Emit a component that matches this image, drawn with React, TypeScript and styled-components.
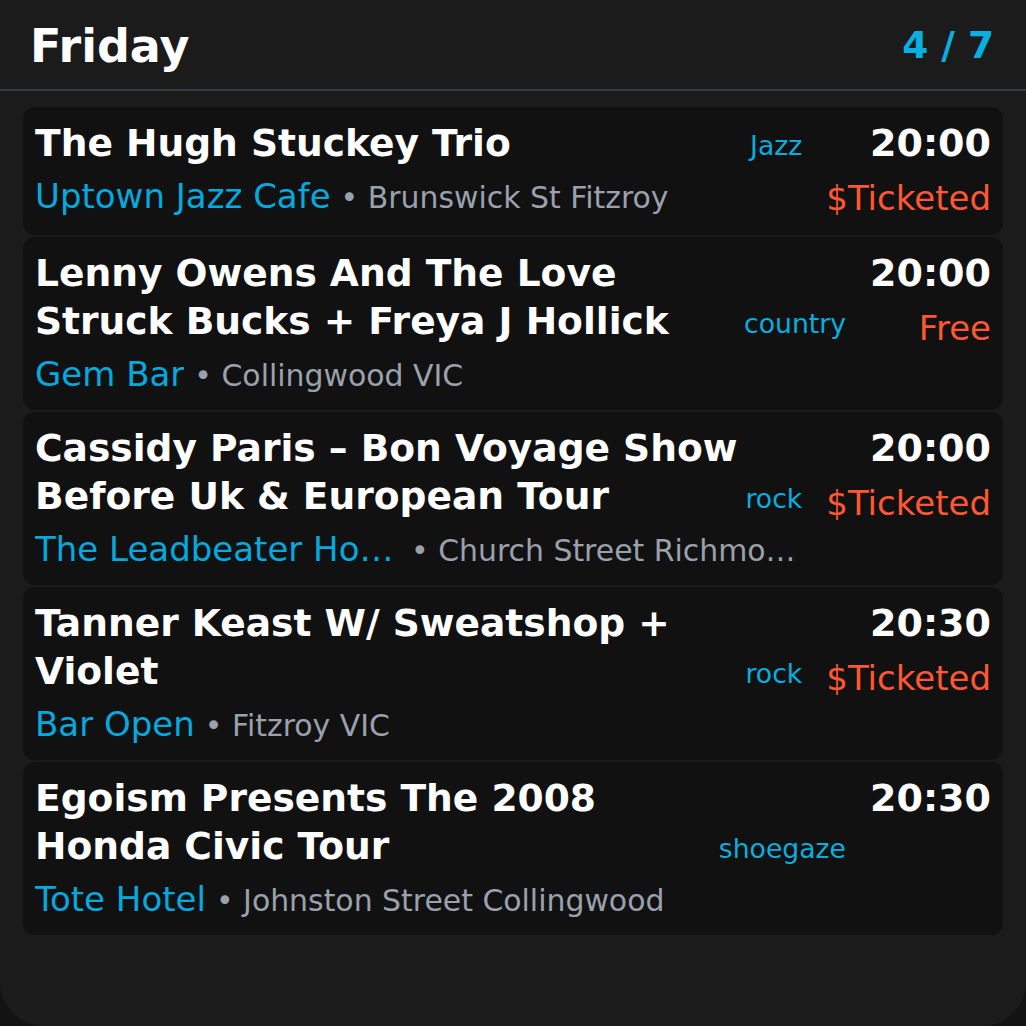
import React from "react";
import styled, { createGlobalStyle } from "styled-components";

const Global = createGlobalStyle`
  html, body { margin: 0; padding: 0; background: #131313; }
  body { font-family: "DejaVu Sans", "Noto Sans", sans-serif; }
  * { box-sizing: border-box; }
`;

const Screen = styled.div`
  width: 1026px;
  height: 1026px;
  background: #1b1b1b;
  border-radius: 0 0 44px 44px;
  overflow: hidden;
  display: flex;
  flex-direction: column;
`;

const Header = styled.header`
  height: 91px;
  display: flex;
  align-items: center;
  justify-content: space-between;
  padding: 2px 32px 0 30px;
  border-bottom: 2px solid #363c46;
`;

const Day = styled.h1`
  margin: 0;
  font-size: 46px;
  font-weight: 700;
  color: #ffffff;
  line-height: 1;
`;

const Count = styled.div`
  font-size: 37.4px;
  font-weight: 700;
  color: #08b0e2;
  line-height: 1;
`;

const List = styled.div`
  display: flex;
  flex-direction: column;
  gap: 2px;
  padding: 16px 23px 0 23px;
`;

const Card = styled.div`
  background: #111111;
  border-radius: 12px;
  padding: 12px;
  display: flex;
  gap: 24px;
`;

const Main = styled.div`
  flex: 1;
  min-width: 0;
  display: flex;
  flex-direction: column;
`;

const TitleRow = styled.div`
  display: flex;
  align-items: flex-end;
  gap: 3px;
`;

const Title = styled.div`
  flex: 1;
  font-size: 37.6px;
  font-weight: 700;
  line-height: 48px;
  color: #ffffff;
`;

const Genre = styled.div`
  font-size: 26.7px;
  line-height: 30px;
  color: #0aaede;
  margin-bottom: 6px;
  white-space: nowrap;
`;

const VenueLine = styled.div`
  display: flex;
  align-items: baseline;
  margin-top: 6px;
  height: 47px;
  line-height: 46px;
  white-space: nowrap;
  min-width: 0;
`;

const Venue = styled.span<{ $max?: number }>`
  font-size: 34px;
  color: #05a9de;
  overflow: hidden;
  text-overflow: ellipsis;
  flex: 0 0 auto;
  max-width: ${(p) => (p.$max ? `${p.$max}px` : "none")};
`;

const Address = styled.span`
  font-size: 29.9px;
  color: #9aa1ad;
  overflow: hidden;
  text-overflow: ellipsis;
  flex: 0 1 auto;
  min-width: 0;
  margin-left: 10px;
`;

const Side = styled.div`
  display: flex;
  flex-direction: column;
  align-items: flex-end;
`;

const Time = styled.div`
  font-size: 38px;
  font-weight: 700;
  line-height: 48px;
  color: #ffffff;
`;

const Price = styled.div`
  font-size: 34px;
  line-height: 50px;
  color: #ff5733;
  margin-top: 6px;
`;

type Gig = {
  title: string;
  genre: string;
  venue: string;
  address: string;
  time: string;
  price?: string;
  venueMax?: number;
};

const gigs: Gig[] = [
  {
    title: "The Hugh Stuckey Trio",
    genre: "Jazz",
    venue: "Uptown Jazz Cafe",
    address: "Brunswick St Fitzroy",
    time: "20:00",
    price: "$Ticketed",
  },
  {
    title: "Lenny Owens And The Love Struck Bucks + Freya J Hollick",
    genre: "country",
    venue: "Gem Bar",
    address: "Collingwood VIC",
    time: "20:00",
    price: "Free",
  },
  {
    title: "Cassidy Paris – Bon Voyage Show Before Uk & European Tour",
    genre: "rock",
    venue: "The Leadbeater Hotel",
    address: "Church Street Richmond VIC",
    time: "20:00",
    price: "$Ticketed",
    venueMax: 366,
  },
  {
    title: "Tanner Keast W/ Sweatshop + Violet",
    genre: "rock",
    venue: "Bar Open",
    address: "Fitzroy VIC",
    time: "20:30",
    price: "$Ticketed",
  },
  {
    title: "Egoism Presents The 2008 Honda Civic Tour",
    genre: "shoegaze",
    venue: "Tote Hotel",
    address: "Johnston Street Collingwood",
    time: "20:30",
  },
];

export default function App() {
  return (
    <>
      <Global />
      <Screen>
        <Header>
          <Day>Friday</Day>
          <Count>4 / 7</Count>
        </Header>
        <List>
          {gigs.map((g) => (
            <Card key={g.title}>
              <Main>
                <TitleRow>
                  <Title>{g.title}</Title>
                  <Genre>{g.genre}</Genre>
                </TitleRow>
                <VenueLine>
                  <Venue $max={g.venueMax}>{g.venue}</Venue>
                  <Address>• {g.address}</Address>
                </VenueLine>
              </Main>
              <Side>
                <Time>{g.time}</Time>
                {g.price && <Price>{g.price}</Price>}
              </Side>
            </Card>
          ))}
        </List>
      </Screen>
    </>
  );
}
